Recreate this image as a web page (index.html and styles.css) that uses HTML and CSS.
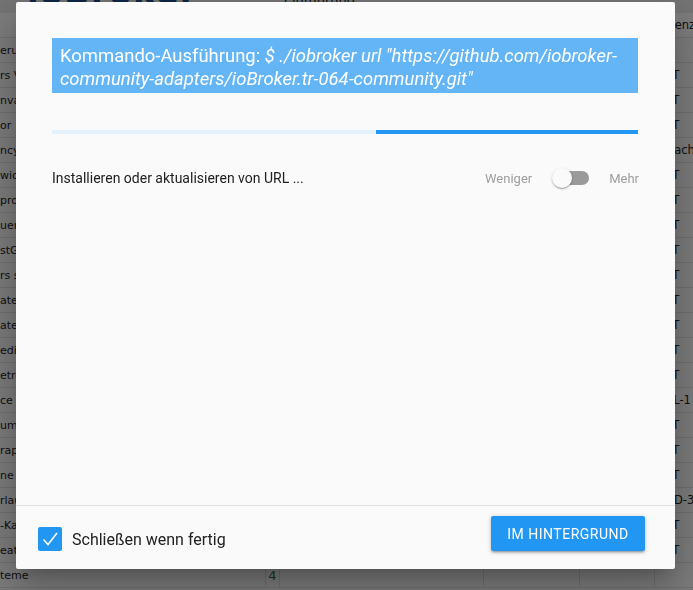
FILE: index.html
```html
<!DOCTYPE html>
<html lang="de">
<head>
<meta charset="utf-8">
<title>Kommando-Ausführung</title>
<link rel="stylesheet" href="styles.css">
</head>
<body>
<div class="page">
  <div class="topbar">
    <svg class="logo" width="16" height="20" viewBox="0 0 16 20"><path d="M2 -6 A 12 12 0 0 0 9 18" fill="none" stroke="#2a6dbf" stroke-width="4"/></svg>
    <span class="brand">ioBroker Adapter</span>
    <span class="tab">Einführung</span>
  </div>
  <div class="thead"><span class="c-left"></span><span class="c-num"></span><span class="c-mid"></span><span class="c-right">Lizenz</span></div>
  <div class="row"><span class="c-left">erue</span><span class="c-num"></span><span class="c-mid"></span><span class="c-right"></span></div>
  <div class="row"><span class="c-left">rs V</span><span class="c-num"></span><span class="c-mid"></span><span class="c-right">MIT</span></div>
  <div class="row"><span class="c-left">nva</span><span class="c-num"></span><span class="c-mid"></span><span class="c-right">MIT</span></div>
  <div class="row"><span class="c-left">or</span><span class="c-num"></span><span class="c-mid"></span><span class="c-right">MIT</span></div>
  <div class="row"><span class="c-left">ncy</span><span class="c-num"></span><span class="c-mid"></span><span class="c-right">Apache</span></div>
  <div class="row"><span class="c-left">wic</span><span class="c-num"></span><span class="c-mid"></span><span class="c-right">MIT</span></div>
  <div class="row"><span class="c-left">prol</span><span class="c-num"></span><span class="c-mid"></span><span class="c-right">MIT</span></div>
  <div class="row"><span class="c-left">uer</span><span class="c-num"></span><span class="c-mid"></span><span class="c-right">MIT</span></div>
  <div class="row"><span class="c-left">stG</span><span class="c-num"></span><span class="c-mid"></span><span class="c-right">MIT</span></div>
  <div class="row"><span class="c-left">rs s</span><span class="c-num"></span><span class="c-mid"></span><span class="c-right">MIT</span></div>
  <div class="row"><span class="c-left">ater</span><span class="c-num"></span><span class="c-mid"></span><span class="c-right">MIT</span></div>
  <div class="row"><span class="c-left">ater</span><span class="c-num"></span><span class="c-mid"></span><span class="c-right">MIT</span></div>
  <div class="row"><span class="c-left">edia</span><span class="c-num"></span><span class="c-mid"></span><span class="c-right">MIT</span></div>
  <div class="row"><span class="c-left">etro</span><span class="c-num"></span><span class="c-mid"></span><span class="c-right">MIT</span></div>
  <div class="row"><span class="c-left">ce g</span><span class="c-num"></span><span class="c-mid"></span><span class="c-right">EPL-1</span></div>
  <div class="row"><span class="c-left">umb</span><span class="c-num"></span><span class="c-mid"></span><span class="c-right">MIT</span></div>
  <div class="row"><span class="c-left">rap</span><span class="c-num"></span><span class="c-mid"></span><span class="c-right">MIT</span></div>
  <div class="row"><span class="c-left">ne a</span><span class="c-num"></span><span class="c-mid"></span><span class="c-right">MIT</span></div>
  <div class="row"><span class="c-left">rlau</span><span class="c-num"></span><span class="c-mid"></span><span class="c-right">BSD-3</span></div>
  <div class="row"><span class="c-left">-Ka</span><span class="c-num"></span><span class="c-mid"></span><span class="c-right">MIT</span></div>
  <div class="row"><span class="c-left">eath</span><span class="c-num"></span><span class="c-mid"></span><span class="c-right">MIT</span></div>
  <div class="row"><span class="c-left">teme</span><span class="c-num green">4</span><span class="c-mid"></span><span class="c-right"></span></div>
</div>
<div class="backdrop"></div>
<div class="dialog">
  <div class="content">
    <div class="cmd">Kommando-Ausführung: <i>$ ./iobroker url "https://github.com/iobroker-community-adapters/ioBroker.tr-064-community.git"</i></div>
    <div class="progress"><div class="bar"></div></div>
    <div class="status">
      <span class="status-text">Installieren oder aktualisieren von URL ...</span>
      <div class="toggle">
        <span class="tlabel">Weniger</span>
        <span class="switch"><span class="track"></span><span class="thumb"></span></span>
        <span class="tlabel">Mehr</span>
      </div>
    </div>
  </div>
  <div class="footer">
    <label class="check">
      <span class="box"><svg width="24" height="24" viewBox="0 0 24 24"><path d="M5.5 12.5 L10 17.5 L19 6" fill="none" stroke="#fff" stroke-width="1.6"/></svg></span>
      <span class="check-label">Schließen wenn fertig</span>
    </label>
    <button class="btn">IM HINTERGRUND</button>
  </div>
</div>
</body>
</html>
```
FILE: styles.css
```css
html, body {
  margin: 0;
  padding: 0;
}
body {
  width: 693px;
  height: 590px;
  overflow: hidden;
  background: #fafafa;
  font-family: "DejaVu Sans", Verdana, sans-serif;
  font-size: 11px;
  color: #222;
}
.page {
  width: 693px;
}
.topbar {
  height: 13px;
  background: #ebebeb;
  display: flex;
  align-items: flex-start;
  overflow: hidden;
  position: relative;
}
.logo {
  flex: none;
}
.brand {
  margin-left: 11px;
  margin-top: -21px;
  font-size: 34px;
  font-weight: bold;
  color: #1d4f8c;
  line-height: 26px;
  letter-spacing: 1px;
}
.tab {
  margin-left: auto;
  margin-right: 338px;
  margin-top: -8px;
  font-size: 13px;
  color: #222;
}
.thead, .row {
  display: flex;
  height: 24px;
  align-items: center;
  border-bottom: 1px solid #e0e0e0;
}
.thead {
  background: #fcfcfc;
}
.row {
  background: #fafafa;
}
.c-left {
  width: 266px;
  flex: none;
  border-right: 1px solid #e0e0e0;
  height: 100%;
  display: flex;
  align-items: center;
  box-sizing: border-box;
  white-space: nowrap;
}
.c-num {
  width: 13px;
  flex: none;
  border-right: 1px solid #e0e0e0;
  height: 100%;
  display: flex;
  align-items: center;
  justify-content: center;
  font-size: 13px;
}
.green {
  color: #2e7d32;
}
.c-mid {
  width: 375px;
  flex: none;
  height: 100%;
  box-sizing: border-box;
  background-image: linear-gradient(#e0e0e0, #e0e0e0), linear-gradient(#e0e0e0, #e0e0e0), linear-gradient(#e0e0e0, #e0e0e0);
  background-size: 1px 100%, 1px 100%, 1px 100%;
  background-position: 203px 0, 299px 0, 374px 0;
  background-repeat: no-repeat;
}
.c-right {
  flex: 1;
  padding-left: 4px;
  white-space: nowrap;
  overflow: hidden;
  font-size: 11.5px;
}
.backdrop {
  position: fixed;
  inset: 0;
  background: rgba(0, 0, 0, 0.5);
}
.dialog {
  position: absolute;
  left: 16px;
  top: 2px;
  width: 659px;
  height: 567px;
  background: #fafafa;
  border-radius: 2px;
  box-shadow: 0 11px 15px -7px rgba(0,0,0,0.2), 0 24px 38px 3px rgba(0,0,0,0.14), 0 9px 46px 8px rgba(0,0,0,0.12);
  display: flex;
  flex-direction: column;
  font-family: Roboto, "Noto Sans", sans-serif;
}
.content {
  flex: 1;
  padding: 36px 37px 0 36px;
  display: flex;
  flex-direction: column;
}
.cmd {
  background: #64b5f6;
  color: #fff;
  font-size: 18.45px;
  line-height: 23px;
  padding: 7px 8px 2px 8px;
}
.cmd i {
  font-style: italic;
}
.progress {
  margin-top: 37px;
  height: 4px;
  background: #e3f1fd;
  display: flex;
  justify-content: flex-end;
}
.bar {
  width: 44.7%;
  background: #2196f3;
}
.status {
  margin-top: 26px;
  height: 36px;
  display: flex;
  align-items: center;
  justify-content: space-between;
}
.status-text {
  font-size: 14px;
  color: #212121;
}
.toggle {
  display: flex;
  align-items: center;
  gap: 20px;
  margin-right: -1px;
}
.tlabel {
  font-size: 13px;
  color: #9e9e9e;
}
.switch {
  position: relative;
  width: 37px;
  height: 20px;
  display: block;
}
.track {
  position: absolute;
  left: 3px;
  right: 0;
  top: 3px;
  height: 14px;
  border-radius: 7px;
  background: #9a9a9a;
}
.thumb {
  position: absolute;
  left: 0;
  top: 0;
  width: 20px;
  height: 20px;
  border-radius: 50%;
  background: #fafafa;
  box-shadow: 0 1px 3px rgba(0,0,0,0.2), 0 1px 1px rgba(0,0,0,0.14), 0 2px 1px -1px rgba(0,0,0,0.12);
}
.footer {
  height: 63px;
  border-top: 1px solid #e0e0e0;
  display: flex;
  justify-content: space-between;
  align-items: flex-start;
  padding: 0 30px 0 22px;
}
.check {
  display: flex;
  align-items: center;
  gap: 10px;
  margin-top: 21px;
}
.box {
  width: 24px;
  height: 24px;
  border-radius: 2px;
  background: #2196f3;
  display: block;
}
.box svg {
  display: block;
}
.check-label {
  font-size: 16px;
  color: #212121;
}
.btn {
  margin-top: 10px;
  width: 154px;
  height: 35px;
  border: none;
  border-radius: 2px;
  background: #2196f3;
  color: #fff;
  font-family: Roboto, "Noto Sans", sans-serif;
  font-size: 14px;
  letter-spacing: 0.5px;
  box-shadow: 0 1px 5px rgba(0,0,0,0.2), 0 2px 2px rgba(0,0,0,0.14), 0 3px 1px -2px rgba(0,0,0,0.12);
  padding: 0;
}
```
